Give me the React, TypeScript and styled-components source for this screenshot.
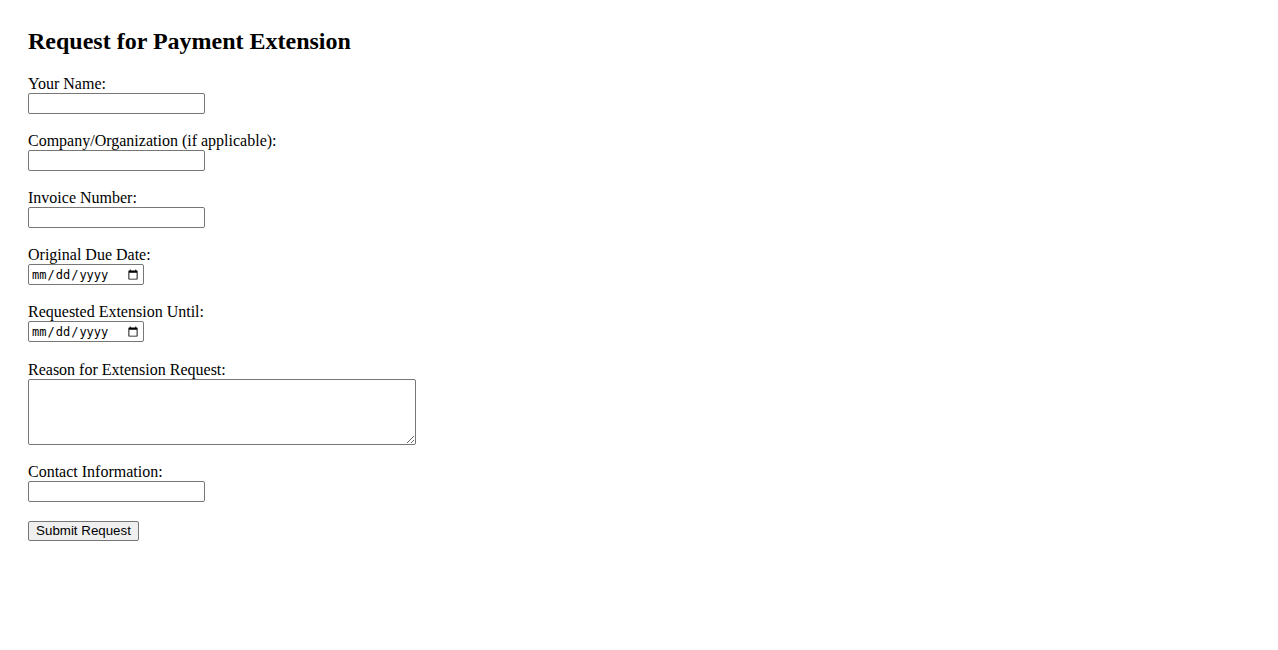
import React from "react";
import styled, { createGlobalStyle } from "styled-components";

const GlobalStyle = createGlobalStyle`
  html, body {
    margin: 0;
    padding: 0;
    background: #ffffff;
  }
  body {
    font-family: "Liberation Serif", "Times New Roman", serif;
    font-size: 16px;
    color: #000000;
  }
`;

const Page = styled.main`
  padding: 27px 28px 28px;
`;

const Title = styled.h2`
  margin: 0 0 20px;
  font-family: "Liberation Serif", "Times New Roman", serif;
  font-size: 24px;
  font-weight: bold;
  line-height: 28px;
`;

const Form = styled.form`
  display: flex;
  flex-direction: column;
  align-items: flex-start;
  gap: 18px;
`;

const Field = styled.div<{ $extraTop?: number }>`
  display: flex;
  flex-direction: column;
  align-items: flex-start;
  margin-top: ${(p) => p.$extraTop ?? 0}px;
`;

const Label = styled.label`
  display: block;
  font-size: 16px;
  line-height: 18px;
`;

const TextInput = styled.input`
  box-sizing: border-box;
  width: 177px;
  height: 21px;
  margin: 0;
  padding: 1px 2px;
  border: 1px solid #767676;
  border-radius: 2px;
  font-family: "Liberation Sans", Arial, sans-serif;
  font-size: 13.33px;
  background: #ffffff;
`;

const DateInput = styled.input`
  box-sizing: border-box;
  width: 116px;
  height: 21px;
  margin: 0;
  padding: 1px 2px;
  border: 1px solid #767676;
  border-radius: 2px;
  font-family: "DejaVu Sans Mono", "Liberation Mono", monospace;
  font-size: 12px;
  background: #ffffff;
`;

const TextArea = styled.textarea`
  box-sizing: border-box;
  width: 388px;
  height: 66px;
  margin: 0;
  padding: 2px;
  border: 1px solid #767676;
  border-radius: 2px;
  font-family: "Liberation Mono", monospace;
  font-size: 13.33px;
  background: #ffffff;
`;

const SubmitButton = styled.button`
  box-sizing: border-box;
  width: 111px;
  height: 20px;
  margin: 1px 0 0;
  padding: 0 6px 1px;
  border: 1px solid #767676;
  border-radius: 2px;
  background: #efefef;
  color: #000000;
  font-family: "Liberation Sans", Arial, sans-serif;
  font-size: 13.33px;
  line-height: 15px;
  cursor: pointer;
`;

const fields: { id: string; label: string; kind: "text" | "date" | "area"; extraTop?: number }[] = [
  { id: "name", label: "Your Name:", kind: "text" },
  { id: "company", label: "Company/Organization (if applicable):", kind: "text" },
  { id: "invoice", label: "Invoice Number:", kind: "text" },
  { id: "due", label: "Original Due Date:", kind: "date" },
  { id: "until", label: "Requested Extension Until:", kind: "date" },
  { id: "reason", label: "Reason for Extension Request:", kind: "area", extraTop: 1 },
  { id: "contact", label: "Contact Information:", kind: "text" },
];

export default function App() {
  return (
    <>
      <GlobalStyle />
      <Page>
        <Title>Request for Payment Extension</Title>
        <Form onSubmit={(e) => e.preventDefault()}>
          {fields.map((f) => (
            <Field key={f.id} $extraTop={f.extraTop}>
              <Label htmlFor={f.id}>{f.label}</Label>
              {f.kind === "text" && <TextInput id={f.id} type="text" />}
              {f.kind === "date" && <DateInput id={f.id} type="date" />}
              {f.kind === "area" && <TextArea id={f.id} />}
            </Field>
          ))}
          <SubmitButton type="submit">Submit Request</SubmitButton>
        </Form>
      </Page>
    </>
  );
}
